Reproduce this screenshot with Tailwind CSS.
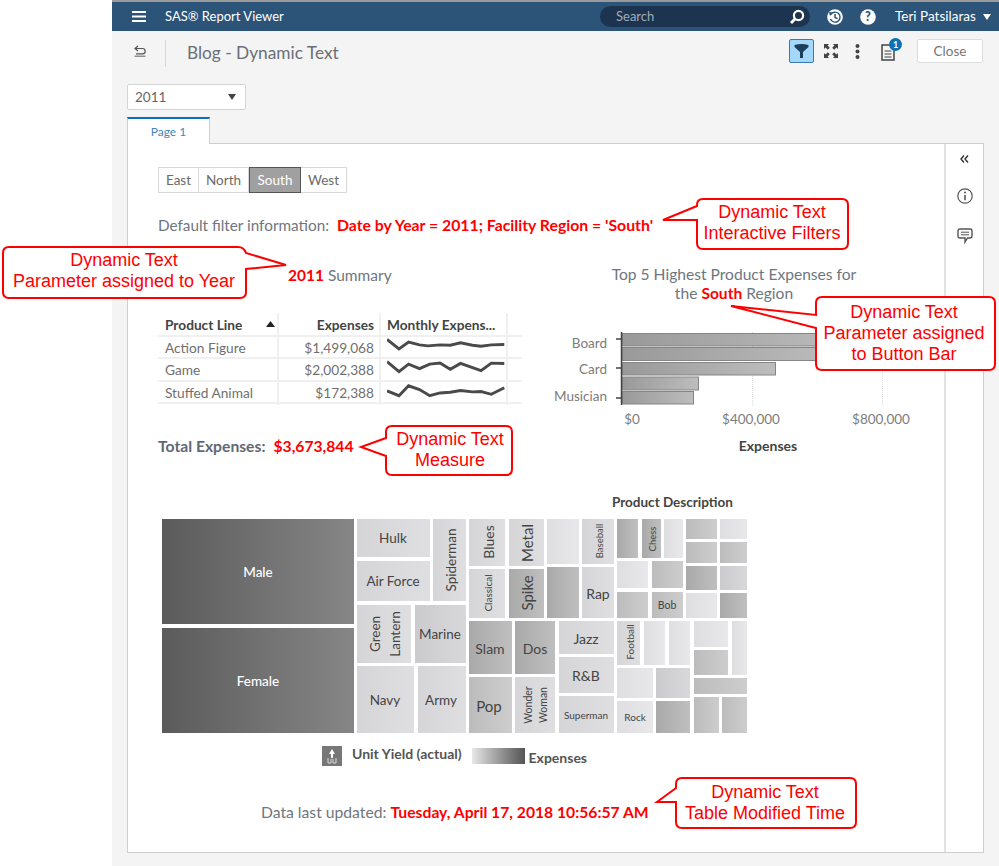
<!DOCTYPE html>
<html lang="en">
<head>
    <meta charset="UTF-8">
    <title>SAS Report Viewer - Blog - Dynamic Text</title>
    <script src="https://cdn.jsdelivr.net/npm/@tailwindcss/browser@4"></script>
</head>
<body class="bg-white">
<div class="relative w-[999px] h-[866px] overflow-hidden font-[Lato,sans-serif] text-[#6e7680]">
    <div class="ml-[112px] h-[866px] bg-[#f4f4f4] border-t-2 border-[#9a9a9a]">
        <!-- top bar -->
        <header class="h-[29px] bg-[#2c5378] flex items-center text-white">
            <svg class="ml-[20px]" width="14" height="11" viewBox="0 0 14 11" fill="#fff"><rect width="14" height="2"/><rect y="4.5" width="14" height="2"/><rect y="9" width="14" height="2"/></svg>
            <span class="ml-[19px] w-[118px] text-[13px] whitespace-nowrap">SAS® Report Viewer</span>
            <div class="ml-[317px] w-[210px] h-[21px] rounded-full bg-[#1c344f] flex items-center justify-between pl-[16px] pr-[5px]">
                <span class="text-[13px] text-[#9fadba]">Search</span>
                <svg width="16" height="16" viewBox="0 0 16 16" fill="none" stroke="#fff"><circle cx="9.5" cy="6.5" r="4.6" stroke-width="2.2"/><path d="M6 10 L2 14" stroke-width="2.8"/></svg>
            </div>
            <svg class="ml-[17px]" width="16" height="16" viewBox="0 0 16 16"><circle cx="8" cy="8" r="7.8" fill="#fff"/><path d="M3.8 5.5 A5 5 0 1 1 3.4 10" fill="none" stroke="#2c5378" stroke-width="1.4"/><path d="M2 3 L6 3.6 L3 7 Z" fill="#2c5378"/><path d="M8 5 V8.4 L10.6 9.6" fill="none" stroke="#2c5378" stroke-width="1.5"/></svg>
            <svg class="ml-[17px]" width="16" height="16" viewBox="0 0 16 16"><circle cx="8" cy="8" r="7.8" fill="#fff"/><text x="8" y="12.4" text-anchor="middle" font-size="12.5" font-weight="900" fill="#2c5378">?</text></svg>
            <span class="ml-[19px] text-[13.5px] whitespace-nowrap">Teri Patsilaras</span>
            <svg class="ml-[7px]" width="8" height="6" viewBox="0 0 8 6" fill="#fff"><path d="M0 0 H8 L4 6 Z"/></svg>
        </header>

        <!-- toolbar -->
        <div class="h-[53px] flex items-start">
            <svg class="ml-[22px] mt-[14px]" width="12" height="12" viewBox="0 0 12 12" fill="none" stroke="#555" stroke-width="1.2"><path d="M4 1 L1 3.5 L4 6"/><path d="M1 3.5 H8.5 A2.6 2.6 0 0 1 8.5 8.8 H2"/><path d="M0.5 11.2 H11.5" stroke="#777"/></svg>
            <div class="ml-[19px] mt-[9px] w-px h-[27px] bg-[#d6d6d6]"></div>
            <div class="ml-[21px] mt-[10px] w-[152px] text-[17.3px] leading-[24px] text-[#6a6f76] whitespace-nowrap">Blog - Dynamic Text</div>
            <div class="ml-[450px] mt-[8px] w-[25px] h-[24px] rounded-[2px] bg-[#a3d8fb] border border-[#3a7ab0] flex items-center justify-center">
                <svg width="15" height="14" viewBox="0 0 15 14" fill="#1e3f5c"><path d="M0.5 1 Q7.5 -1 14.5 1 V3 L9 8 V14 H6 V8 L0.5 3 Z"/></svg>
            </div>
            <svg class="ml-[10px] mt-[13px]" width="14" height="14" viewBox="0 0 14 14" fill="#444"><path d="M0 0 H5 L3.6 1.6 L5.8 3.8 L3.8 5.8 L1.6 3.6 L0 5 Z"/><path d="M14 0 H9 L10.4 1.6 L8.2 3.8 L10.2 5.8 L12.4 3.6 L14 5 Z"/><path d="M0 14 H5 L3.6 12.4 L5.8 10.2 L3.8 8.2 L1.6 10.4 L0 9 Z"/><path d="M14 14 H9 L10.4 12.4 L8.2 10.2 L10.2 8.2 L12.4 10.4 L14 9 Z"/></svg>
            <svg class="ml-[17px] mt-[13px]" width="5" height="15" viewBox="0 0 5 15" fill="#444"><circle cx="2.5" cy="2" r="2"/><circle cx="2.5" cy="7.5" r="2"/><circle cx="2.5" cy="13" r="2"/></svg>
            <div class="relative ml-[21px] mt-[7px] w-[20px] h-[24px]">
                <svg class="absolute left-0 top-[6px]" width="14" height="17" viewBox="0 0 14 17" fill="none" stroke="#444" stroke-width="1.5"><path d="M1 1 H9 L13 5 V16 H1 Z"/><path d="M3.5 7 H10.5 M3.5 10 H10.5 M3.5 13 H10.5" stroke-width="1.2"/></svg>
                <div class="absolute left-[8px] top-0 w-[13px] h-[13px] rounded-full bg-[#0b72b5] text-white text-[9px] font-bold leading-[13px] text-center">1</div>
            </div>
            <div class="ml-[16px] mt-[8px] w-[66px] h-[24px] bg-white border border-[#dcdcdc] rounded-[2px] text-[13.5px] leading-[22px] text-center text-[#777]">Close</div>
        </div>

        <!-- year selector -->
        <div class="ml-[15px] w-[119px] h-[26px] bg-white border border-[#d4d4d4] rounded-[2px] flex items-center justify-between pl-[7px] pr-[9px] text-[13.5px] text-[#666]">
            <span>2011</span>
            <svg width="8" height="6" viewBox="0 0 8 6" fill="#444"><path d="M0 0 H8 L4 6 Z"/></svg>
        </div>

        <!-- tab -->
        <div class="relative z-10 ml-[15px] mt-[7px] -mb-px w-[83px] h-[27px] bg-white border-t-2 border-x border-t-[#0b6fc0] border-x-[#d0d0d0] text-center text-[12px] leading-[26px] text-[#3d86bf]">Page 1</div>

        <!-- report page -->
        <div class="ml-[15px] w-[857px] h-[710px] bg-white border border-[#cfcfcf] flex">
            <main class="w-[816px] pl-[30px] pt-[23px]">
                <div class="flex w-[189px] h-[26px] text-[13.5px] leading-[24px] text-center text-[#6b6b6b]">
                    <div class="w-[41px] border border-[#d8d8d8]">East</div>
                    <div class="w-[50px] border-y border-r border-[#d8d8d8]">North</div>
                    <div class="w-[52px] bg-[#a0a0a0] border border-[#555] text-white">South</div>
                    <div class="w-[46px] border-y border-r border-[#d8d8d8]">West</div>
                </div>

                <div class="mt-[22px] h-[20px] leading-[20px] text-[15.3px] whitespace-nowrap">Default filter information:<span class="ml-[8px] text-[15.8px] text-[#f00] font-bold">Date by Year = 2011; Facility Region = 'South'</span></div>

                <div class="mt-[29px] flex h-[196px]">
                    <section class="w-[380px]">
                        <div class="mt-[1px] h-[20px] pl-[130px] leading-[20px] text-[15.5px]"><span class="text-[#f00] font-bold">2011</span> Summary</div>
                        <div class="mt-[28px] w-[364px] h-[92px] grid grid-cols-[121px_102px_127px_14px] grid-rows-[24px_22px_23px_22px_1px] text-[13.7px] text-[#6f6f6f] leading-[21px]">
                            <div class="border-b-2 border-r-2 border-[#f0f0f0] pl-[7px] pr-[1px] font-bold text-[#444] flex items-center justify-between">Product Line <svg width="9" height="6" viewBox="0 0 9 6" class="mr-[1px]" fill="#222"><path d="M0 6 H9 L4.5 0 Z"/></svg></div>
                            <div class="border-b-2 border-r-2 border-[#f0f0f0] pr-[5px] font-bold text-[#444] text-right leading-[24px]">Expenses</div>
                            <div class="border-b-2 border-r-2 border-[#f0f0f0] pl-[6px] font-bold text-[#444] leading-[24px] whitespace-nowrap overflow-hidden">Monthly Expens...</div>
                            <div class="border-b-2 border-[#f0f0f0]"></div>

                            <div class="border-b-2 border-r-2 border-[#f0f0f0] pl-[7px]">Action Figure</div>
                            <div class="border-b-2 border-r-2 border-[#f0f0f0] pr-[5px] text-right">$1,499,068</div>
                            <div class="border-b-2 border-r-2 border-[#f0f0f0] pl-[6px]"><svg class="block" width="118" height="20" viewBox="1145 300 345 58.5" fill="none" stroke="#4a4a4a" stroke-width="8.5"><polyline points="1145,307 1180,335 1208,315 1240,323 1265,326 1300,323 1330,324 1360,317 1395,324 1420,327 1450,323 1488,322"/></svg></div>
                            <div class="border-b-2 border-[#f0f0f0]"></div>

                            <div class="border-b-2 border-r-2 border-[#f0f0f0] pl-[7px]">Game</div>
                            <div class="border-b-2 border-r-2 border-[#f0f0f0] pr-[5px] text-right">$2,002,388</div>
                            <div class="border-b-2 border-r-2 border-[#f0f0f0] pl-[6px]"><svg class="block" width="118" height="20" viewBox="1145 365 345 58.5" fill="none" stroke="#4a4a4a" stroke-width="8.5"><polyline points="1145,373 1180,402 1208,380 1240,393 1270,380 1300,377 1330,395 1360,378 1395,390 1420,399 1450,377 1488,378"/></svg></div>
                            <div class="border-b-2 border-[#f0f0f0]"></div>

                            <div class="border-b-2 border-r-2 border-[#f0f0f0] pl-[7px]">Stuffed Animal</div>
                            <div class="border-b-2 border-r-2 border-[#f0f0f0] pr-[5px] text-right">$172,388</div>
                            <div class="border-b-2 border-r-2 border-[#f0f0f0] pl-[6px]"><svg class="block" width="118" height="20" viewBox="1145 430 345 58.5" fill="none" stroke="#4a4a4a" stroke-width="8.5"><polyline points="1145,456 1180,470 1208,441 1240,452 1270,470 1300,462 1330,460 1360,455 1395,459 1420,458 1450,466 1488,447"/></svg></div>
                            <div class="border-b-2 border-[#f0f0f0]"></div>

                            <div class="border-r-2 border-[#f0f0f0]"></div>
                            <div class="border-r-2 border-[#f0f0f0]"></div>
                            <div class="border-r-2 border-[#f0f0f0]"></div>
                            <div></div>
                        </div>
                        <div class="mt-[31px] h-[20px] leading-[20px] text-[15.7px] font-bold text-[#5f6974] whitespace-nowrap">Total Expenses:<span class="ml-[8px] text-[#f00]">$3,673,844</span></div>
                    </section>

                    <section class="w-[392px]">
                        <div class="pt-[1px] text-center text-[15.6px] leading-[19px]">Top 5 Highest Product Expenses for<br>the <span class="text-[#f00] font-bold">South</span> Region</div>
                        <!-- viewBox uses page coordinates -->
                        <svg class="block mt-[18px]" width="392" height="140" viewBox="538 322 392 140" font-size="13.5" fill="#7c7c7c">
                            <defs>
                                <linearGradient id="bar"><stop offset="0" stop-color="#999"/><stop offset="1" stop-color="#bdbdbd"/></linearGradient>
                            </defs>
                            <path d="M752.5 333 V406 M882.5 333 V406" stroke="#ddd" stroke-dasharray="1 1"/>
                            <g fill="url(#bar)" stroke="#858585">
                                <rect x="622.5" y="334.5" width="230" height="12.5"/>
                                <rect x="622.5" y="348.5" width="218" height="13"/>
                                <rect x="622.5" y="363.5" width="153" height="12.5"/>
                                <rect x="622.5" y="378" width="76" height="13"/>
                                <rect x="622.5" y="392.5" width="71" height="12.5"/>
                            </g>
                            <path d="M621.5 333 V406 M616 340 H621 M616 369 H621 M616 399 H621" stroke="#444" stroke-width="1.5" fill="none"/>
                            <text x="607" y="349" text-anchor="end">Board</text>
                            <text x="607" y="375" text-anchor="end">Card</text>
                            <text x="607" y="402" text-anchor="end">Musician</text>
                            <text x="632" y="425" text-anchor="middle">$0</text>
                            <text x="751" y="425" text-anchor="middle">$400,000</text>
                            <text x="881" y="425" text-anchor="middle">$800,000</text>
                            <text x="768" y="452" text-anchor="middle" font-size="14" font-weight="700" fill="#444">Expenses</text>
                        </svg>
                    </section>
                </div>

                <!-- treemap -->
                <div class="mt-[32px] ml-[454px] h-[20px] leading-[20px] text-[13.5px] font-bold text-[#444] whitespace-nowrap">Product Description</div>
                <svg class="block mt-[5px] ml-[4px]" width="590" height="220" viewBox="162 517 590 220" font-size="13" fill="#444" text-anchor="middle" dominant-baseline="central">
                    <defs>
                        <linearGradient id="tDark"><stop offset="0" stop-color="#5b5b5b"/><stop offset="1" stop-color="#868686"/></linearGradient>
                        <linearGradient id="tA"><stop offset="0" stop-color="#a9a9a9"/><stop offset="1" stop-color="#bfbfbf"/></linearGradient>
                        <linearGradient id="tB"><stop offset="0" stop-color="#bcbcbc"/><stop offset="1" stop-color="#cdcdcd"/></linearGradient>
                        <linearGradient id="tC"><stop offset="0" stop-color="#cbcbcd"/><stop offset="1" stop-color="#d8d8da"/></linearGradient>
                        <linearGradient id="tD"><stop offset="0" stop-color="#d5d5d7"/><stop offset="1" stop-color="#dfdfe1"/></linearGradient>
                        <linearGradient id="tE"><stop offset="0" stop-color="#dedee0"/><stop offset="1" stop-color="#e8e8ea"/></linearGradient>
                    </defs>
                    <rect x="162" y="519" width="192" height="105" fill="url(#tDark)"/>
                    <rect x="162" y="628" width="192" height="105" fill="url(#tDark)"/>
                    <g font-size="13.5" fill="#fff" font-weight="500"><text x="258" y="572">Male</text><text x="258" y="681">Female</text></g>

                    <g fill="url(#tD)">
                        <rect x="357" y="519" width="73" height="38"/>
                        <rect x="357" y="561" width="73" height="40"/>
                        <rect x="433" y="519" width="33" height="82"/>
                        <rect x="357" y="605" width="54" height="58"/>
                        <rect x="357" y="666" width="57" height="67"/>
                        <rect x="418" y="666" width="48" height="67"/>
                        <rect x="469" y="519" width="36" height="47"/>
                        <rect x="469" y="569" width="36" height="49"/>
                        <rect x="509" y="519" width="35" height="47"/>
                        <rect x="582" y="519" width="32" height="45"/>
                        <rect x="582" y="567" width="32" height="51"/>
                        <rect x="515" y="677" width="40" height="56"/>
                        <rect x="559" y="621" width="55" height="33"/>
                        <rect x="559" y="657" width="55" height="36"/>
                        <rect x="559" y="696" width="55" height="37"/>
                        <rect x="617" y="621" width="23" height="44"/>
                    </g>
                    <rect x="415" y="605" width="51" height="58" fill="url(#tC)"/>
                    <rect x="547" y="519" width="32" height="45" fill="url(#tE)"/>
                    <rect x="547" y="567" width="32" height="51" fill="url(#tA)"/>
                    <rect x="509" y="569" width="35" height="49" fill="url(#tA)"/>
                    <rect x="469" y="621" width="43" height="53" fill="url(#tA)"/>
                    <rect x="515" y="621" width="40" height="53" fill="url(#tA)"/>
                    <rect x="469" y="677" width="43" height="56" fill="url(#tB)"/>

                    <g fill="url(#tA)">
                        <rect x="617" y="519" width="21" height="39"/>
                        <rect x="642" y="519" width="19" height="39"/>
                        <rect x="686" y="566" width="31" height="24"/>
                        <rect x="720" y="593" width="27" height="25"/>
                        <rect x="656" y="701" width="34" height="32"/>
                    </g>
                    <g fill="url(#tB)">
                        <rect x="652" y="561" width="31" height="27"/>
                        <rect x="617" y="592" width="31" height="26"/>
                        <rect x="652" y="592" width="31" height="26"/>
                        <rect x="686" y="519" width="31" height="20"/>
                        <rect x="686" y="542" width="31" height="21"/>
                        <rect x="720" y="542" width="27" height="21"/>
                        <rect x="694" y="650" width="34" height="25"/>
                        <rect x="694" y="678" width="53" height="16"/>
                        <rect x="694" y="697" width="25" height="36"/>
                        <rect x="722" y="697" width="25" height="36"/>
                    </g>
                    <g fill="url(#tC)">
                        <rect x="720" y="566" width="27" height="24"/>
                        <rect x="656" y="668" width="34" height="30"/>
                    </g>
                    <g fill="url(#tE)">
                        <rect x="664" y="519" width="19" height="39"/>
                        <rect x="617" y="561" width="31" height="27"/>
                        <rect x="720" y="519" width="27" height="20"/>
                        <rect x="686" y="593" width="31" height="25"/>
                        <rect x="644" y="621" width="21" height="44"/>
                        <rect x="669" y="621" width="21" height="44"/>
                        <rect x="694" y="621" width="34" height="26"/>
                        <rect x="732" y="621" width="15" height="54"/>
                        <rect x="617" y="668" width="36" height="30"/>
                        <rect x="617" y="701" width="36" height="32"/>
                    </g>

                    <text x="393" y="538" font-size="13.5">Hulk</text>
                    <text x="393" y="581" font-size="13.5">Air Force</text>
                    <text transform="translate(451 560) rotate(-90)" font-size="13.5">Spiderman</text>
                    <text transform="translate(375 634) rotate(-90)" font-size="13.5">Green</text>
                    <text transform="translate(395 634) rotate(-90)" font-size="13.5">Lantern</text>
                    <text x="440" y="634" font-size="13.5">Marine</text>
                    <text x="385" y="700" font-size="13.5">Navy</text>
                    <text x="441" y="700" font-size="13.5">Army</text>
                    <text transform="translate(488 542) rotate(-90)" font-size="14">Blues</text>
                    <text transform="translate(527 543) rotate(-90)" font-size="15">Metal</text>
                    <text transform="translate(488 593) rotate(-90)" font-size="10">Classical</text>
                    <text transform="translate(527 593) rotate(-90)" font-size="15">Spike</text>
                    <text transform="translate(599 541) rotate(-90)" font-size="9.5">Baseball</text>
                    <text x="598" y="593" font-size="14">Rap</text>
                    <text x="490" y="648" font-size="14">Slam</text>
                    <text x="535" y="648" font-size="14">Dos</text>
                    <text x="586" y="638" font-size="14">Jazz</text>
                    <text x="586" y="675" font-size="14">R&amp;B</text>
                    <text x="586" y="715" font-size="10">Superman</text>
                    <text x="489" y="706" font-size="15">Pop</text>
                    <text transform="translate(528 705) rotate(-90)" font-size="10.5">Wonder</text>
                    <text transform="translate(543 705) rotate(-90)" font-size="10.5">Woman</text>
                    <text transform="translate(652 539) rotate(-90)" font-size="9.5">Chess</text>
                    <text x="667" y="605" font-size="10.5">Bob</text>
                    <text transform="translate(630 642) rotate(-90)" font-size="10">Football</text>
                    <text x="635" y="717" font-size="10">Rock</text>
                </svg>

                <!-- legend -->
                <div class="mt-[9px] ml-[164px] flex h-[24px] text-[14px] font-bold text-[#555]">
                    <svg width="20" height="20" viewBox="0 0 20 20"><rect width="20" height="20" fill="#777"/><path d="M10 3 L13 8 H11 V12 H9 V8 H7 Z" fill="#fff"/><path d="M6 12 V17 H9 V13 M14 12 V17 H11 V13" fill="none" stroke="#ddd"/></svg>
                    <span class="ml-[10px] mt-[-2px] leading-[20px] whitespace-nowrap">Unit Yield (actual)</span>
                    <div class="ml-[10px] mt-[2px] w-[53px] h-[16px] bg-gradient-to-r from-[#e8e8e8] to-[#555555]"></div>
                    <span class="ml-[4px] mt-[2px] leading-[20px]">Expenses</span>
                </div>

                <div class="mt-[32px] ml-[103px] h-[20px] leading-[20px] text-[15.7px] whitespace-nowrap">Data last updated: <span class="text-[#f00] font-bold">Tuesday, April 17, 2018 10:56:57 AM</span></div>
            </main>

            <aside class="w-[39px] border-l-2 border-[#e2e2e2] flex flex-col items-center">
                <svg class="mt-[11px]" width="9" height="8" viewBox="0 0 9 8" fill="none" stroke="#333" stroke-width="1.4"><path d="M4 0.5 L1 4 L4 7.5 M8 0.5 L5 4 L8 7.5"/></svg>
                <svg class="mt-[25px]" width="16" height="16" viewBox="0 0 16 16" fill="none" stroke="#555" stroke-width="1.2"><circle cx="8" cy="8" r="7.2"/><path d="M8 7 V12.2" stroke-width="1.6"/><circle cx="8" cy="4.6" r="1" fill="#555" stroke="none"/></svg>
                <svg class="mt-[24px]" width="16" height="16" viewBox="0 0 16 16" fill="none" stroke="#555" stroke-width="1.4"><path d="M3 1 H13 Q15 1 15 3 V8 Q15 10 13 10 H10.5 L8 14 V10 H3 Q1 10 1 8 V3 Q1 1 3 1 Z"/><path d="M4 4.2 H12 M4 6.8 H12" stroke-width="1"/></svg>
            </aside>
        </div>
    </div>

    <!-- red annotations drawn over the screenshot, page coordinates -->
    <svg class="absolute left-0 top-0 font-['Liberation_Sans',sans-serif]" width="999" height="866" viewBox="0 0 999 866" font-size="18" text-anchor="middle">
        <g fill="#fff" stroke="#f00" stroke-width="2">
            <path d="M703 199 H842 Q848 199 848 205 V243 Q848 249 842 249 H703 Q697 249 697 243 V220 H663 L697 206 V205 Q697 199 703 199 Z"/>
            <path d="M9 247 H238 Q244 247 246 253 L286 265 L246 269 V292 Q246 298 240 298 H9 Q3 298 3 292 V253 Q3 247 9 247 Z"/>
            <path d="M392 426 H506 Q512 426 512 432 V469 Q512 475 506 475 H392 Q386 475 386 469 V456 L361 447 L386 438 V432 Q386 426 392 426 Z"/>
            <path d="M822 297 H989 Q995 297 995 303 V364 Q995 370 989 370 H822 Q816 370 816 364 V328 L731 306 L816 315 V303 Q816 297 822 297 Z"/>
            <path d="M682 778 H850 Q856 778 856 784 V822 Q856 828 850 828 H682 Q676 828 676 822 V802 H657 L676 788 V784 Q676 778 682 778 Z"/>
        </g>
        <g fill="#f00">
            <text x="772" y="218">Dynamic Text</text>
            <text x="772" y="239">Interactive Filters</text>
            <text x="124" y="266">Dynamic Text</text>
            <text x="124" y="287">Parameter assigned to Year</text>
            <text x="450" y="445">Dynamic Text</text>
            <text x="450" y="466">Measure</text>
            <text x="904" y="318">Dynamic Text</text>
            <text x="904" y="339">Parameter assigned</text>
            <text x="904" y="360">to Button Bar</text>
            <text x="765" y="798">Dynamic Text</text>
            <text x="765" y="819">Table Modified Time</text>
        </g>
    </svg>
</div>
</body>
</html>
